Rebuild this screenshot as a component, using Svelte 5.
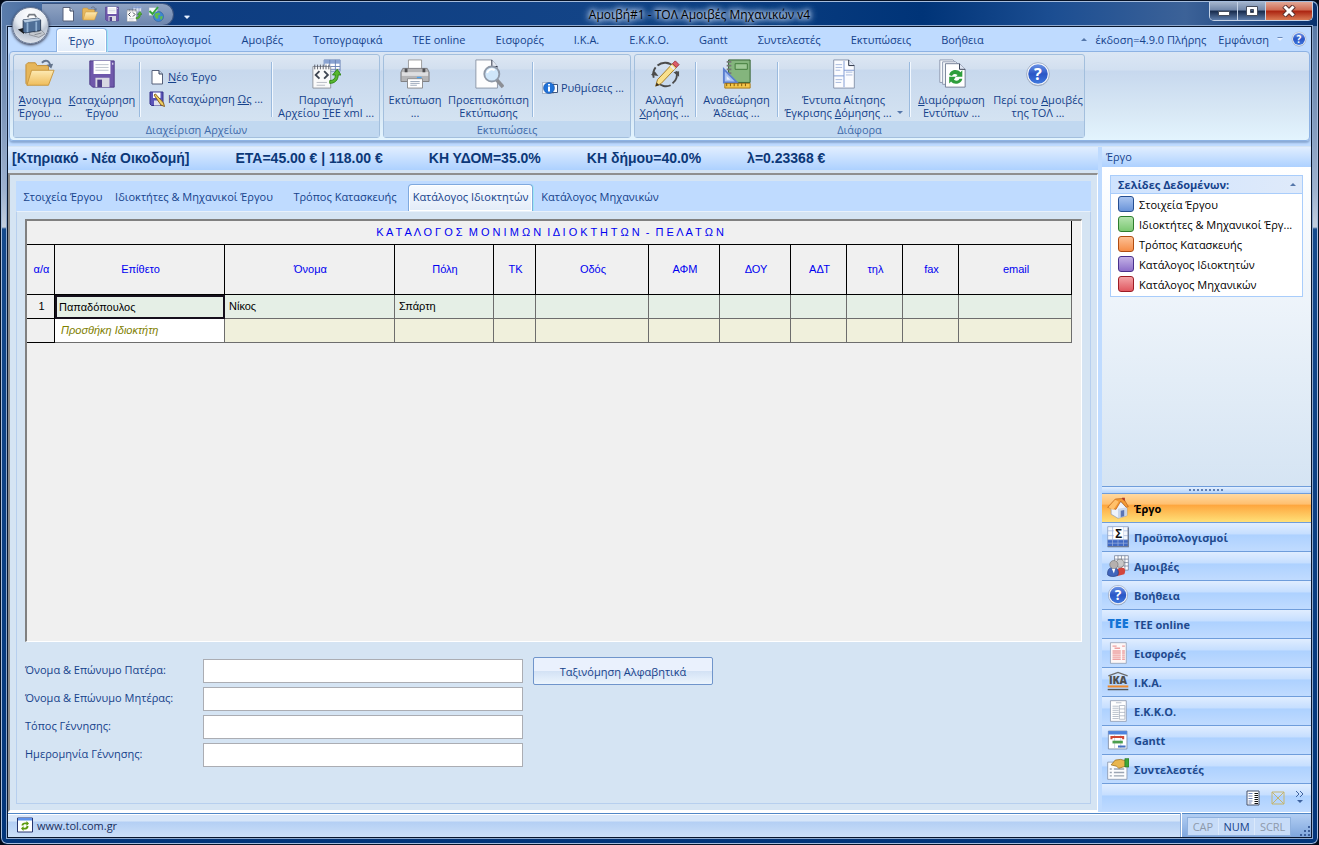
<script lang="ts">
  type Tool = { icon: string; lines: string[]; width: number; arrow?: boolean };

  const ribbonTabs = [
    'Έργο',
    'Προϋπολογισμοί',
    'Αμοιβές',
    'Τοπογραφικά',
    'ΤΕΕ online',
    'Εισφορές',
    'Ι.Κ.Α.',
    'Ε.Κ.Κ.Ο.',
    'Gantt',
    'Συντελεστές',
    'Εκτυπώσεις',
    'Βοήθεια',
  ];

  const quickTools = [
    { icon: 'new', label: 'Νέο' },
    { icon: 'folder', label: 'Άνοιγμα' },
    { icon: 'disk', label: 'Καταχώρηση' },
    { icon: 'xml', label: 'Αρχείο xml' },
    { icon: 'globe', label: 'Έλεγχος έκδοσης' },
  ];

  // _ marks the access key letter
  const fileTools: Tool[] = [
    { icon: 'folder', lines: ['_Άνοιγμα', 'Έργου ...'], width: 52 },
    { icon: 'disk', lines: ['_Καταχώρηση', 'Έργου'], width: 72 },
  ];
  const xmlTool: Tool = { icon: 'xml', lines: ['Παραγωγή', 'Αρχείου _ΤΕΕ xml ...'], width: 106 };
  const printTools: Tool[] = [
    { icon: 'printer', lines: ['Εκτύπωση', '...'], width: 62 },
    { icon: 'preview', lines: ['Προεπισκόπιση', 'Εκτύπωσης'], width: 85 },
  ];
  const miscTools: Tool[][] = [
    [{ icon: 'pencil', lines: ['Αλλαγή', '_Χρήσης ...'], width: 59 }],
    [{ icon: 'rulers', lines: ['Αναθεώρηση', 'Άδειας ...'], width: 79 }],
    [{ icon: 'forms', lines: ['Έντυπα Αίτησης', 'Έγκρισης _Δόμησης ...'], width: 129, arrow: true }],
    [
      { icon: 'recycle', lines: ['_Διαμόρφωση', 'Εντύπων ...'], width: 81 },
      { icon: 'help', lines: ['Περί του _Αμοιβές', 'της ΤΟΛ ...'], width: 92 },
    ],
  ];

  const summary = [
    '[Κτηριακό - Νέα Οικοδομή]',
    'ΕΤΑ=45.00 € | 118.00 €',
    'ΚΗ ΥΔΟΜ=35.0%',
    'ΚΗ δήμου=40.0%',
    'λ=0.23368 €',
  ];

  const pageTabs = [
    { label: 'Στοιχεία Έργου', width: 86 },
    { label: 'Ιδιοκτήτες & Μηχανικοί Έργου', width: 176 },
    { label: 'Τρόπος Κατασκευής', width: 126 },
    { label: 'Κατάλογος Ιδιοκτητών', width: 125 },
    { label: 'Κατάλογος Μηχανικών', width: 134 },
  ];

  const columns = [
    { label: 'α/α', width: 28 },
    { label: 'Επίθετο', width: 170 },
    { label: 'Όνομα', width: 170 },
    { label: 'Πόλη', width: 99 },
    { label: 'ΤΚ', width: 42 },
    { label: 'Οδός', width: 113 },
    { label: 'ΑΦΜ', width: 71 },
    { label: 'ΔΟΥ', width: 71 },
    { label: 'ΑΔΤ', width: 56 },
    { label: 'τηλ', width: 56 },
    { label: 'fax', width: 56 },
    { label: 'email', width: 113 },
  ];

  const owners = [['Παπαδόπουλος', 'Νίκος', 'Σπάρτη', '', '', '', '', '', '', '', '']];

  const fields = [
    { id: 'father', label: 'Όνομα & Επώνυμο Πατέρα:' },
    { id: 'mother', label: 'Όνομα & Επώνυμο Μητέρας:' },
    { id: 'birthplace', label: 'Τόπος Γέννησης:' },
    { id: 'birthdate', label: 'Ημερομηνία Γέννησης:' },
  ];

  const dataPages = [
    { label: 'Στοιχεία Έργου', color: 'blue' },
    { label: 'Ιδιοκτήτες & Μηχανικοί Έργ...', color: 'green' },
    { label: 'Τρόπος Κατασκευής', color: 'orange' },
    { label: 'Κατάλογος Ιδιοκτητών', color: 'purple' },
    { label: 'Κατάλογος Μηχανικών', color: 'red' },
  ];

  const modules = [
    { icon: 'home', label: 'Έργο' },
    { icon: 'sigma', label: 'Προϋπολογισμοί' },
    { icon: 'people', label: 'Αμοιβές' },
    { icon: 'help', label: 'Βοήθεια' },
    { icon: 'tee', label: 'ΤΕΕ online' },
    { icon: 'redsheet', label: 'Εισφορές' },
    { icon: 'ika', label: 'Ι.Κ.Α.' },
    { icon: 'greysheet', label: 'Ε.Κ.Κ.Ο.' },
    { icon: 'gantt', label: 'Gantt' },
    { icon: 'factors', label: 'Συντελεστές' },
  ];

  let ribbonTab = $state('Έργο');
  let pageTab = $state('Κατάλογος Ιδιοκτητών');
  let module = $state('Έργο');
</script>

{#snippet icon(name: string, size: number)}
  <svg class="icon" width={size} height={size} viewBox="0 0 32 32" aria-hidden="true">
    {#if name === 'new'}
      <path d="M6 3h14l7 7v20H6z" fill="#fff" stroke="#56607a" stroke-width="2" />
      <path d="M20 3v7h7" fill="#cfd9ea" stroke="#33405c" stroke-width="2" />
    {:else if name === 'folder'}
      <path d="M1 6l2-2h8l2 3h12v6H8L3 28 1 26z" fill="#e6b65a" stroke="#c08c35" />
      <path d="M7 12h24l-6 16H2z" fill="url(#folderFill)" stroke="#c9963e" />
      <path d="M18 4c4-4 8-2 9 3" fill="none" stroke="#64748c" stroke-width="2" />
      <path d="M23 6l7-1-2 5z" fill="#64748c" />
    {:else if name === 'disk'}
      <path d="M3 2h26v28H6l-3-3z" fill="#6f58ab" stroke="#4d3b86" />
      <path d="M7 2h18v14H7z" fill="#fff" />
      <path d="M9 6h14M9 9h14M9 12h14" stroke="#b9c0cc" />
      <path d="M9 20h15v10H9z" fill="#d8d8e2" />
      <path d="M11 22h5v8h-5z" fill="#51428a" />
      <path d="M27 4h1v2h-1z" fill="#fff" />
    {:else if name === 'disk-edit'}
      <path d="M2 2h26v27H5l-3-3z" fill="#5b54b8" stroke="#34308a" stroke-width="2" />
      <path d="M8 3h15v11H8z" fill="#fff" />
      <path d="M10 19h13v10H10z" fill="#dfe0ee" />
      <path d="M10 8l3-2 16 18 2 7-7-3z" fill="#f1cf62" stroke="#8a6420" stroke-width="2" />
    {:else if name === 'xml'}
      <path d="M14 1h17v12H14z" fill="#fff" stroke="#6a83b5" />
      <path d="M14 1h17v4H14z" fill="#89a3d2" />
      <path d="M14 8h17M14 11h17M20 1v12M26 1v12" stroke="#6a83b5" />
      <path d="M2 8h19v23H2z" fill="#fafafa" stroke="#8f949c" />
      <path d="M4 6v5M7 6v5M10 6v5M13 6v5M16 6v5M19 6v5" stroke="#555b66" />
      <path d="M9 13l-4 4 4 4M14 13l4 4-4 4" fill="none" stroke="#3f4652" stroke-width="2" />
      <path d="M6 25h11M6 28h9" stroke="#b5bac2" />
      <path d="M20 23c4 0 6-2 6-6h-3l5-6 4 6h-3c0 6-4 9-9 9z" fill="#57b72f" stroke="#2f8415" />
    {:else if name === 'globe'}
      <path d="M2 3h17v16H2z" fill="#f3f6fa" stroke="#96a4b8" />
      <path d="M3 10l6 6L20 2" fill="none" stroke="#35a63a" stroke-width="4" />
      <circle cx="21" cy="21" r="10" fill="#3e86d4" stroke="#225893" />
      <path d="M14 15l8-2 3 4-5 2 1 5-4 2-4-6zM25 20l5 1-3 7-3-3z" fill="#5dbd4e" />
    {:else if name === 'printer'}
      <path d="M9 1h14v13H9z" fill="#fff" stroke="#9a9a9a" />
      <path d="M3 10h26l2 4v10H1V14z" fill="#b4b4b6" stroke="#7d7d80" />
      <path d="M2 14h28v4H2z" fill="#dedee0" />
      <path d="M5 10h3v4H5zM24 10h3v4h-3z" fill="#4f4f52" />
      <path d="M18 19h5v2h-5z" fill="#4aa3f0" />
      <path d="M8 21h16v10H8z" fill="#fff" stroke="#8a8a8c" />
      <path d="M11 24h10M11 26h10M11 28h7" stroke="#9aa7ba" />
    {:else if name === 'preview'}
      <path d="M2 1h17l6 7v23H2z" fill="#fdfdfe" stroke="#8b95a6" />
      <path d="M19 1v7h6" fill="#e4e9f2" stroke="#222b3d" />
      <path d="M24 22l7 8" stroke="#8c8f96" stroke-width="4" />
      <circle cx="19" cy="16" r="8" fill="#cfe6fa" stroke="#8f99a8" stroke-width="2" />
      <path d="M14 15c1-4 5-5 8-3" fill="none" stroke="#fff" stroke-width="2" />
    {:else if name === 'info'}
      <path d="M1 5h22v22H1z" fill="#f5f7fa" stroke="#77859c" />
      <path d="M20 9h11v16H20z" fill="#fff" stroke="#3f567e" stroke-width="2" />
      <circle cx="14" cy="16" r="11" fill="#2072d8" stroke="#124a9a" />
      <path d="M12 13h4v10h-4zM12 8h4v3h-4z" fill="#fff" />
    {:else if name === 'pencil'}
      <path d="M8 7a12 12 0 0 1 17 1M28 13a12 12 0 0 1-4 13M22 28a12 12 0 0 1-14-3M4 20a12 12 0 0 1 2-11" fill="none" stroke="#4b4b4b" stroke-width="2" />
      <path d="M1 17l4-4 4 5zM31 13l-6 1 6 5z" fill="#4b4b4b" />
      <path d="M6 29l2-7L24 5l4 4-16 17z" fill="#f9e08c" stroke="#a57a1f" />
      <path d="M24 5l3-3 4 4-3 3z" fill="#de5c68" stroke="#99323d" />
      <path d="M22 7l4 4" stroke="#e8eef8" stroke-width="2" />
      <path d="M6 29l1-4 3 3z" fill="#3c3123" />
    {:else if name === 'rulers'}
      <path d="M7 1h23v24H7z" fill="#84b57d" stroke="#2f5e2c" />
      <path d="M14 5h13v6H14z" fill="#9cc894" stroke="#3f7a3a" />
      <path d="M5 3h5M5 7h5M5 11h5M5 15h5" stroke="#777" stroke-width="2" />
      <path d="M2 11v14h14z" fill="#a9c3f2" stroke="#5b7fd0" stroke-width="2" />
      <path d="M5 18v4h4z" fill="#e6eefb" />
      <path d="M3 26h27v5H3z" fill="#f3c64b" stroke="#a97816" />
      <path d="M5 26v3M9 26v3M13 26v3M17 26v3M21 26v3M25 26v3" stroke="#7c5409" />
    {:else if name === 'forms'}
      <path d="M5 1h16l6 6v24H5z" fill="#fbfcff" stroke="#8894ab" />
      <path d="M21 1v6h6" fill="#dfe6f3" stroke="#222b3d" />
      <path d="M16 2v28M5 18h11M16 12h11" stroke="#7c99d2" />
      <path d="M7 6h7M7 9h7M7 12h5M18 14h7M18 17h7M7 22h7M7 25h6" stroke="#a5b7dc" />
    {:else if name === 'recycle'}
      <path d="M3 1h14l4 4v20H3z" fill="#f8fafc" stroke="#8c98ae" />
      <path d="M6 3h14l4 4v20H6z" fill="#f8fafc" stroke="#8c98ae" />
      <path d="M9 5h15l6 6v19H9z" fill="#fff" stroke="#6f7b92" />
      <path d="M24 5v6h6" fill="#dfe6f3" stroke="#333c50" />
      <path d="M13 17c1-6 9-7 12-3l2-2v7h-7l2-2c-3-2-5-1-6 1zM27 21c-1 6-9 7-12 3l-2 2v-7h7l-2 3c3 2 5 1 6-1z" fill="#2f9e3c" />
    {:else if name === 'help'}
      <circle cx="16" cy="17" r="14" fill="#6d7a90" opacity="0.5" />
      <circle cx="16" cy="16" r="14" fill="#f4f7fc" stroke="#98a6bf" />
      <circle cx="16" cy="16" r="12" fill="url(#helpFill)" />
      <text x="16" y="23" text-anchor="middle" font-size="20" font-weight="700" fill="#fff">?</text>
    {:else if name === 'home'}
      <path d="M6 14L20 7l9 9v11l-13 4-10-6z" fill="#eef3fa" stroke="#8a9ab5" />
      <path d="M16 17v14l13-4V15z" fill="#c9d6ea" />
      <path d="M20 20l5-1v9l-5 1z" fill="#5a74b4" />
      <path d="M1 15L12 3l12-1 7 12-3 1-8-9-7 12z" fill="#f39a35" stroke="#b9601a" />
      <path d="M2 15L12 4l5 3-8 12z" fill="#ffc06a" />
      <path d="M22 1h4v5l-4-3z" fill="#b13a22" />
    {:else if name === 'sigma'}
      <path d="M1 1h30v29H1z" fill="#f4f7fc" stroke="#7f93b8" />
      <path d="M1 20h30v10H1z" fill="#3f69c4" />
      <path d="M1 7h30M1 14h30M1 20h30M1 25h30M8 1v29M16 20v10M24 1v29" stroke="#9db2dc" />
      <path d="M10 2h14v17H10z" fill="#fff" />
      <text x="17" y="18" text-anchor="middle" font-size="17" font-weight="700" fill="#111">Σ</text>
      <path d="M1 30h30V2" fill="none" stroke="#6d7b96" stroke-width="2" />
    {:else if name === 'people'}
      <path d="M11 1h20v21H11z" fill="#fff" stroke="#68738c" />
      <path d="M11 6h20M11 11h20M11 16h20M16 1v21M21 1v21M26 1v21" stroke="#68738c" />
      <path d="M14 31c-1-9 2-13 7-13s7 4 4 10z" fill="#d2453c" />
      <circle cx="19" cy="12" r="6" fill="#c7c7c7" stroke="#777" />
      <path d="M1 29c-1-8 3-11 8-11s9 4 7 11c-4 3-11 3-15 0z" fill="#4166bd" stroke="#274285" />
      <circle cx="10" cy="14" r="6" fill="#b5b0ae" stroke="#777" />
      <path d="M7 20l3 7 2-7z" fill="#fff" />
    {:else if name === 'tee'}
      <text x="16" y="22" text-anchor="middle" font-size="18" font-weight="800" fill="#1474d6">ΤΕΕ</text>
    {:else if name === 'redsheet'}
      <path d="M5 1h23v30H5z" fill="#fdf7f7" stroke="#8491a8" />
      <path d="M8 6h6M11 9h8M8 13h12M8 16h12M8 19h12M8 22h12M8 25h12M22 6h4M22 13h4M22 16h4M22 19h4M22 22h4M22 25h4" stroke="#eda1a1" stroke-width="2" />
    {:else if name === 'ika'}
      <path d="M2 7L16 2l14 5" fill="none" stroke="#6b6b6b" stroke-width="2" />
      <text x="16" y="19" text-anchor="middle" font-size="15" font-weight="800" fill="#4d4d4f">IKA</text>
      <path d="M1 21h30v3H1z" fill="#ee8a2e" />
      <path d="M1 26h30v2H1z" fill="#555" />
    {:else if name === 'greysheet'}
      <path d="M5 1h23v30H5z" fill="#fff" stroke="#7d899f" />
      <path d="M13 4h8M8 9h9M8 12h9M8 15h9M8 18h9M8 21h9M8 24h9M8 27h9" stroke="#9ba5b4" />
      <path d="M18 8h8v20h-8zM18 13h8M18 18h8M18 23h8" fill="none" stroke="#9ba5b4" />
    {:else if name === 'gantt'}
      <path d="M2 3h27v26H2z" fill="#fff" stroke="#66738c" />
      <path d="M2 3h27v5H2z" fill="#4d83dc" />
      <path d="M11 8v20M20 8v20" stroke="#bcc4d2" />
      <path d="M5 10h20v5h-3v-2H8v2H5z" fill="#cf4733" />
      <path d="M8 17h15v4H8z" fill="#4b9e4e" />
      <path d="M16 24h11v3H16z" fill="#446fc2" />
    {:else if name === 'factors'}
      <path d="M1 6h28v25H1z" fill="#fbfcfe" stroke="#77859c" />
      <path d="M4 16h3M4 21h3M4 26h3M10 16h15M10 21h15M10 26h15" stroke="#9ba5b4" stroke-width="2" />
      <path d="M6 10L12 3l8-1 7 2v8l-10 3-3-3z" fill="#e9b64e" stroke="#8f6416" />
      <path d="M26 1h6v12h-6z" fill="#3ea83a" stroke="#22701f" />
    {:else if name === 'sheet'}
      <path d="M4 2h24v28H4z" fill="#fff" stroke="#45506a" stroke-width="2" />
      <path d="M7 7h8M7 12h8M7 17h8M7 22h8M7 26h6" stroke="#6f83b5" stroke-width="2" />
      <path d="M19 7h7M19 11h7M19 15h7M19 19h7M19 23h7M19 27h7" stroke="#111" stroke-width="2" />
    {:else if name === 'cross'}
      <path d="M4 4h24v24H4zM4 4l24 24M28 4L4 28" fill="none" stroke="#c4b56e" stroke-width="2" />
    {:else if name === 'refresh'}
      <path d="M1 2h30v28H1z" fill="#fff" stroke="#26356e" stroke-width="2" />
      <path d="M2 2h28v5H2z" fill="#5f92ea" />
      <path d="M9 17c0-5 5-7 10-6V8l5 5-5 5v-3c-4-1-6 0-6 2zM23 18c0 6-5 8-10 7v3l-5-5 5-5v3c4 1 6 0 6-3z" fill="#5b9a10" />
    {:else if name === 'logo'}
      <path d="M15 22l12-2 5 5-7 4-11-3z" fill="#c3c8cf" stroke="#8a8f97" />
      <path d="M19 23l7-1M20 26l8-2" stroke="#7d838c" />
      <path d="M1 20l7-2v7z" fill="#17191c" />
      <path d="M7 9l17-2 3 2v12L9 24l-2-2z" fill="#4f6f97" stroke="#25364f" />
      <path d="M7 9l17-2 3 2-18 3z" fill="#b7cbe0" />
      <path d="M12 6l2-3h6l2 3" fill="none" stroke="#767b82" stroke-width="2" />
      <path d="M12 12v11M22 11v11" stroke="#8fb0d2" stroke-width="2" />
    {/if}
  </svg>
{/snippet}

{#snippet keyed(text: string)}
  {@const at = text.indexOf('_')}
  {#if at < 0}{text}{:else}{text.slice(0, at)}<u>{text[at + 1]}</u>{text.slice(at + 2)}{/if}
{/snippet}

{#snippet bigTool(tool: Tool)}
  <button class="big-tool" style:width="{tool.width}px">
    {@render icon(tool.icon, tool.icon === 'help' ? 26 : 30)}
    <span>{@render keyed(tool.lines[0])}</span>
    <span>{@render keyed(tool.lines[1])}{#if tool.arrow}<i class="caret"></i>{/if}</span>
  </button>
{/snippet}

<svg class="defs" width="0" height="0" aria-hidden="true">
  <defs>
    <linearGradient id="folderFill" x1="0" y1="0" x2="0" y2="1">
      <stop offset="0" stop-color="#fdeab4" />
      <stop offset="1" stop-color="#efbd5c" />
    </linearGradient>
    <linearGradient id="helpFill" x1="0" y1="0" x2="0" y2="1">
      <stop offset="0" stop-color="#6b93e6" />
      <stop offset="0.5" stop-color="#2a56c6" />
      <stop offset="1" stop-color="#3f78dd" />
    </linearGradient>
  </defs>
</svg>

<div class="window">
  <button class="orb" aria-label="Μενού εφαρμογής">{@render icon('logo', 28)}</button>

  <header class="titlebar">
    <div class="quick">
      {#each quickTools as tool}
        <button aria-label={tool.label}>{@render icon(tool.icon, 16)}</button>
      {/each}
    </div>
    <button class="quick-more" aria-label="Προσαρμογή"><i class="caret light"></i></button>
    <h1>Αμοιβή#1 - ΤΟΛ Αμοιβές Μηχανικών v4</h1>
    <div class="caption">
      <button aria-label="Ελαχιστοποίηση">
        <svg width="14" height="12"><path d="M1.500 6.500h11v4h-11z" fill="#fff" stroke="#454c5c" /></svg>
      </button>
      <button aria-label="Μεγιστοποίηση">
        <svg width="14" height="12">
          <path d="M1.500 1.500h11v9h-11zM5.500 4.500h3v3h-3z" fill="#fff" fill-rule="evenodd" stroke="#454c5c" />
        </svg>
      </button>
      <button class="close" aria-label="Κλείσιμο">
        <svg width="14" height="12">
          <path d="M2 1l10 10M12 1L2 11" stroke="#5b3230" stroke-width="5" />
          <path d="M2.500 1.500l9 9M11.500 1.500l-9 9" stroke="#fff" stroke-width="3" />
        </svg>
      </button>
    </div>
  </header>

  <div class="client">
    <nav class="ribbon-tabs">
      {#each ribbonTabs as tab}
        <button class:active={tab === ribbonTab} onclick={() => (ribbonTab = tab)}>{tab}</button>
      {/each}
      <div class="ribbon-right">
        <i class="caret up"></i>
        <span>έκδοση=4.9.0 Πλήρης</span>
        <button>Εμφάνιση</button>
        <i class="caret light"></i>
        <button aria-label="Βοήθεια">{@render icon('help', 16)}</button>
      </div>
    </nav>

    <div class="ribbon">
      <section class="group">
        <div class="tools">
          {#each fileTools as tool}{@render bigTool(tool)}{/each}
          <div class="sep"></div>
          <div class="small-tools file">
            <button>{@render icon('new', 16)}<span><u>Ν</u>έο Έργο</span></button>
            <button>{@render icon('disk-edit', 16)}<span>Καταχώρηση <u>Ως</u> ...</span></button>
          </div>
          <div class="sep"></div>
          {@render bigTool(xmlTool)}
        </div>
        <h2>Διαχείριση Αρχείων</h2>
      </section>
      <section class="group">
        <div class="tools">
          {#each printTools as tool}{@render bigTool(tool)}{/each}
          <div class="sep"></div>
          <div class="small-tools print">
            <button>{@render icon('info', 16)}<span>Ρυθμίσεις ...</span></button>
          </div>
        </div>
        <h2>Εκτυπώσεις</h2>
      </section>
      <section class="group">
        <div class="tools">
          {#each miscTools as part, i}
            {#if i > 0}<div class="sep"></div>{/if}
            {#each part as tool}{@render bigTool(tool)}{/each}
          {/each}
        </div>
        <h2>Διάφορα</h2>
      </section>
    </div>

    <div class="body">
      <main>
        <div class="summary">
          {#each summary as item}<span>{item}</span>{/each}
        </div>

        <div class="panel">
          <nav class="page-tabs">
            {#each pageTabs as tab}
              <button
                class:active={tab.label === pageTab}
                style:width="{tab.width}px"
                onclick={() => (pageTab = tab.label)}>{tab.label}</button
              >
            {/each}
          </nav>

          <div class="page">
            <div class="grid">
              <table>
                <colgroup>
                  {#each columns as col}<col style:width="{col.width}px" />{/each}
                </colgroup>
                <thead>
                  <tr class="title">
                    <th colspan={columns.length}>{'Κ Α Τ Α Λ Ο Γ Ο Σ  Μ Ο Ν Ι Μ Ω Ν  Ι Δ Ι Ο Κ Τ Η Τ Ω Ν  -  Π Ε Λ Α Τ Ω Ν'}</th>
                  </tr>
                  <tr class="heads">
                    {#each columns as col}<th>{col.label}</th>{/each}
                  </tr>
                </thead>
                <tbody>
                  {#each owners as owner, i}
                    <tr>
                      <th>{i + 1}</th>
                      {#each owner as value, j}<td class:current={i === 0 && j === 0}>{value}</td>{/each}
                    </tr>
                  {/each}
                  <tr class="add">
                    <th></th>
                    <td>Προσθήκη Ιδιοκτήτη</td>
                    {#each columns.slice(2) as _}<td></td>{/each}
                  </tr>
                </tbody>
              </table>
            </div>

            <div class="details">
              <div class="fields">
                {#each fields as field}
                  <label for={field.id}>{field.label}</label>
                  <input id={field.id} type="text" />
                {/each}
              </div>
              <button class="sort">Ταξινόμηση Αλφαβητικά</button>
            </div>
          </div>
        </div>
      </main>

      <aside>
        <h2>Έργο</h2>
        <div class="pages">
          <div class="page-box">
            <button class="page-head">Σελίδες Δεδομένων:<i class="caret up"></i></button>
            {#each dataPages as page}
              <a href="#top"><i class="swatch {page.color}"></i><span>{page.label}</span></a>
            {/each}
          </div>
        </div>
        <div class="grip"><i></i></div>
        <nav class="modules">
          {#each modules as item}
            <button class:active={item.label === module} onclick={() => (module = item.label)}>
              {@render icon(item.icon, 22)}<span>{item.label}</span>
            </button>
          {/each}
        </nav>
        <div class="overflow">
          <button aria-label="Κατάσταση">{@render icon('sheet', 16)}</button>
          <button aria-label="Κενό">{@render icon('cross', 16)}</button>
          <button aria-label="Περισσότερα">
            <svg width="10" height="14">
              <path d="M1 1l3 3-3 3M5 1l3 3-3 3" fill="none" stroke="#3f639f" />
              <path d="M2 10h6l-3 3z" fill="#3f639f" />
            </svg>
          </button>
        </div>
      </aside>
    </div>

    <footer>
      <div class="site">{@render icon('refresh', 16)}<a href="#top">www.tol.com.gr</a></div>
      <div class="keys">
        <div class="key-box"><span>CAP</span><span class="on">NUM</span><span>SCRL</span></div>
        <svg class="resize" width="11" height="11">
          <path d="M8 0h2v2H8zM4 4h2v2H4zM8 4h2v2H8zM0 8h2v2H0zM4 8h2v2H4zM8 8h2v2H8z" fill="#3d609b" />
        </svg>
      </div>
    </footer>
  </div>
</div>

<style>
  :global(body) {
    background: #020a18;
  }

  * {
    box-sizing: border-box;
  }

  button {
    padding: 0;
    border: 0;
    background: none;
    color: inherit;
    font: inherit;
    white-space: nowrap;
  }

  h1,
  h2 {
    margin: 0;
    font-weight: 400;
  }

  a {
    color: inherit;
    text-decoration: none;
  }

  .icon {
    display: block;
    flex: none;
  }

  .defs {
    position: absolute;
  }

  .window {
    position: relative;
    display: flex;
    flex-direction: column;
    min-height: 100vh;
    padding: 0 6px 6px;
    border: 1px solid #061226;
    border-radius: 7px;
    background: linear-gradient(#4f719f, #9fb2cf 190px, #c3cede 226px, #164a8c 228px, #02357a);
    box-shadow: inset 0 0 0 1px #a5bcdc;
    color: #15428b;
    font: 11px/13px "Open Sans", "Noto Sans", sans-serif;
  }

  .caret {
    display: inline-block;
    border: 3px solid transparent;
    border-top-color: #5577aa;
    border-bottom: 0;
  }

  .caret.up {
    border-top: 0;
    border-bottom: 3px solid #5577aa;
  }

  .caret.light {
    border-top-color: #e6f0ff;
    filter: drop-shadow(0 -1px #6a8abb);
  }

  .titlebar {
    display: flex;
    align-items: center;
    height: 25px;
    margin: 0 -5px;
    padding-left: 40px;
    border-top: 1px solid #a5bcdc;
    border-radius: 6px 6px 0 0;
    background: linear-gradient(90deg, #5a7cab, #0d3c80 140px, #134487 45%, #003478 70%, #1c4e92 80%, #3c6298 90%, #08306c);
  }

  .quick {
    display: flex;
    gap: 6px;
    height: 23px;
    align-items: center;
    padding: 0 9px 0 18px;
    border: 1px solid #39537f;
    border-left: 0;
    border-radius: 0 12px 12px 0;
    background: linear-gradient(#8fa3c3, #6d86ae);
  }

  .quick-more {
    margin-left: 10px;
  }

  h1 {
    flex: 1;
    color: #000;
    font-size: 12px;
    text-align: center;
    text-shadow: 0 0 4px #dbe8fa, 0 0 6px #c4d7f2, 0 0 8px #b7cdec, 0 0 9px #a0bbe2;
  }

  .caption {
    display: flex;
    align-self: flex-start;
    height: 19px;
    margin-right: 4px;
    border: 1px solid #c4d2e6;
    border-top: 0;
    border-radius: 0 0 5px 5px;
    overflow: hidden;
  }

  .caption button {
    display: grid;
    place-items: center;
    width: 28px;
    border-right: 1px solid #c4d2e6;
    background: linear-gradient(#a4b4cc, #7187a9 45%, #16294b 50%, #5e7daa);
  }

  .caption .close {
    width: 46px;
    border: 0;
    background: linear-gradient(#e2a796, #cf6a52 45%, #ab2310 50%, #d97a54);
  }

  .orb {
    position: absolute;
    top: 6px;
    left: 11px;
    z-index: 2;
    display: grid;
    place-items: center;
    width: 37px;
    height: 37px;
    border: 1px solid #6f7d96;
    border-radius: 50%;
    background: radial-gradient(circle at 50% 20%, #fff, #e6ebf2 45%, #bcc5d3 60%, #f2f5fa);
    box-shadow: 0 1px 3px #223;
  }

  .client {
    display: flex;
    flex: 1;
    flex-direction: column;
    border: 1px solid #07152d;
    background: #bfdbff;
    box-shadow: 0 0 0 1px #8fa9cd;
  }

  .ribbon-tabs {
    display: flex;
    height: 24px;
    padding-left: 48px;
  }

  .ribbon-tabs > button {
    padding: 0 14px;
    border: 1px solid transparent;
    border-bottom: 0;
  }

  .ribbon-tabs > button.active {
    z-index: 1;
    width: 51px;
    height: 24px;
    margin: 1px 2px -1px 0;
    padding: 0;
    border-color: #8db2e3;
    border-radius: 4px 4px 0 0;
    background: linear-gradient(#f4f9ff, #e3edf9);
    box-shadow: inset 0 0 0 1px #fff, 1px 0 #9be8f5;
  }

  .ribbon-right {
    display: flex;
    align-items: center;
    gap: 8px;
    margin-left: auto;
    padding-right: 4px;
  }

  .ribbon-right span {
    margin-right: 4px;
  }

  .ribbon {
    display: flex;
    gap: 3px;
    height: 90px;
    margin: 0 1px;
    padding: 2px 3px;
    border: 1px solid #8db2e3;
    border-radius: 4px;
    background: linear-gradient(#dbe6f4, #d2e0f1 18px, #c7d8ee 19px, #d8e8f5 60px, #e3f4fe);
    box-shadow: 0 2px 2px #8aa9d4;
  }

  .group {
    display: flex;
    flex-direction: column;
    border: 1px solid #a3bfdd;
    border-radius: 3px;
    background: linear-gradient(#dde7f3, #d2dfef 14px, #c7d8ed 15px, #d8e6f3);
  }

  .tools {
    display: flex;
    flex: 1;
  }

  .group h2 {
    height: 16px;
    background: #c1d8f0;
    color: #3e6aaa;
    font-size: 11px;
    line-height: 17px;
    text-align: center;
  }

  .big-tool {
    display: flex;
    flex-direction: column;
    align-items: center;
    padding-top: 3px;
  }

  .big-tool .icon {
    height: 32px;
    margin-bottom: 3px;
  }

  .big-tool .caret {
    margin: 0 0 3px 5px;
  }

  .sep {
    width: 2px;
    height: 55px;
    margin: 7px 0 0 1px;
    border-left: 1px solid #9abade;
    background: #f2f8ff;
  }

  .small-tools {
    display: flex;
    flex-direction: column;
    padding: 13px 6px 0 8px;
    gap: 5px;
  }

  .small-tools.file {
    width: 129px;
  }

  .small-tools.print {
    width: 96px;
    padding-top: 24px;
  }

  .small-tools button {
    display: flex;
    align-items: center;
    gap: 3px;
    height: 17px;
  }

  .body {
    display: flex;
    flex: 1;
    gap: 4px;
    margin-top: 5px;
    border-top: 1px solid #d5e4f3;
  }

  main {
    display: flex;
    flex: 1;
    flex-direction: column;
    min-width: 0;
    background: #d5e4f3;
  }

  .summary {
    display: flex;
    gap: 46px;
    height: 23px;
    margin-bottom: 3px;
    padding-left: 4px;
    background: linear-gradient(#e1eeff, #add1ff);
    color: #0c3878;
    font: bold 14px/23px "Liberation Sans", Arial, sans-serif;
    white-space: nowrap;
  }

  .panel {
    display: flex;
    flex: 1;
    flex-direction: column;
    padding: 6px;
    border: 2px solid;
    border-color: #8f8f8f #fff #fff #8a8a8a;
    border-right-width: 1px;
    background: #d5e4f3;
  }

  .page-tabs {
    display: flex;
    align-items: flex-end;
    height: 30px;
    padding-left: 4px;
    background: #bfdbff;
  }

  .page-tabs button {
    height: 27px;
    padding-bottom: 3px;
    border: 1px solid transparent;
    border-bottom: 0;
  }

  .page-tabs button.active {
    border-color: #7fa9de;
    border-radius: 4px 4px 0 0;
    background: linear-gradient(#f7fbff, #e3ecf8);
    box-shadow: inset 0 0 0 1px #fff, 1px 0 #9be8f5;
  }

  .page {
    display: flex;
    flex: 1;
    flex-direction: column;
    padding: 7px 8px 0;
    border: 1px solid #b7cfee;
    border-top-color: #e8f1fb;
  }

  .grid {
    flex: 1;
    border: 2px solid;
    border-color: #808080 #fff #fff #808080;
    border-right-width: 1px;
    border-bottom-width: 1px;
    background: #f0f0f0;
  }

  table {
    width: 1045px;
    border-collapse: separate;
    border-spacing: 0;
    table-layout: fixed;
    color: #000;
    font: 11px/13px "Liberation Sans", Arial, sans-serif;
  }

  th,
  td {
    height: 24px;
    padding: 0 4px;
    border-right: 1px solid #6d6d6d;
    border-bottom: 1px solid #6d6d6d;
    white-space: pre;
  }

  th {
    padding: 0 0 0 2px;
    border-color: #000;
    font-weight: 400;
  }

  thead th {
    color: #0000f0;
  }

  .heads th {
    height: 50px;
  }

  td {
    background: #e5efe6;
  }

  td.current {
    border: 0;
    background: #e5efe6;
    box-shadow: inset 0 0 0 2px #150f1c;
  }

  .add td {
    background: #f0f0dc;
  }

  .add td:nth-child(2) {
    padding-left: 6px;
    background: #fff;
    color: #808000;
    font-style: italic;
  }

  .details {
    display: flex;
    align-items: flex-start;
    gap: 10px;
    height: 161px;
    padding-top: 15px;
  }

  .fields {
    display: grid;
    grid-template-columns: 178px 320px;
    row-gap: 4px;
    padding-top: 2px;
  }

  .fields label {
    padding-top: 4px;
  }

  .fields input {
    height: 24px;
    border: 1px solid #abadb3;
    background: #fff;
  }

  .sort {
    width: 180px;
    height: 28px;
    border: 1px solid #7095cb;
    border-radius: 2px;
    background: linear-gradient(#eaf1fd 50%, #d3e2f5 51%, #ecf5fd);
  }

  aside {
    display: flex;
    flex-direction: column;
    width: 209px;
    background: #fff;
  }

  aside h2 {
    height: 20px;
    padding-left: 4px;
    background: linear-gradient(#e1eeff, #add1ff);
    font-size: 11px;
    line-height: 20px;
  }

  .pages {
    flex: 1;
    padding: 8px;
    background: linear-gradient(#fff, #d5e4f3);
  }

  .page-box {
    padding-bottom: 2px;
    border: 1px solid #a9cdfb;
    background: #fff;
    color: #000;
  }

  .page-head {
    display: flex;
    align-items: center;
    justify-content: space-between;
    width: 100%;
    height: 18px;
    padding: 0 6px 0 7px;
    border-bottom: 1px solid #a9cdfb;
    background: linear-gradient(90deg, #cfe3fe, #dfeafa);
    color: #15428b;
    font-weight: 700;
  }

  .page-box a {
    display: flex;
    align-items: center;
    gap: 5px;
    height: 20px;
    padding: 0 7px;
    white-space: nowrap;
  }

  .swatch {
    flex: none;
    width: 16px;
    height: 16px;
    border: 1px solid;
    border-radius: 3px;
  }

  .swatch.blue {
    border-color: #264f92;
    background: linear-gradient(#a9c4ef, #6a94d9);
  }

  .swatch.green {
    border-color: #2d7d2d;
    background: linear-gradient(#b4e3ae, #7cc873);
  }

  .swatch.orange {
    border-color: #b04c10;
    background: linear-gradient(#fcc095, #f58d48);
  }

  .swatch.purple {
    border-color: #48308c;
    background: linear-gradient(#c3b1e6, #8d6fc9);
  }

  .swatch.red {
    border-color: #9d1c24;
    background: linear-gradient(#f3a3a6, #e05860);
  }

  .grip {
    display: grid;
    place-items: center;
    height: 8px;
    border: 1px solid #6f9ddb;
    border-width: 1px 0;
    background: linear-gradient(#e3efff, #b6d4fb);
  }

  .grip i {
    width: 35px;
    height: 2px;
    background: repeating-linear-gradient(90deg, #5f7fb3 0 2px, transparent 2px 4px);
  }

  .modules button {
    display: flex;
    align-items: center;
    gap: 5px;
    width: 100%;
    height: 29px;
    padding: 0 5px;
    border-bottom: 1px solid #6f9ddb;
    background: linear-gradient(#e0edff, #c5deff 40%, #add1ff 42%, #c0dbff);
    color: #1f4a8e;
    font-weight: 700;
  }

  .modules button.active {
    background: linear-gradient(#ffd9a0, #ffc070 36%, #fea63e 40%, #ffe078);
    color: #000;
  }

  .overflow {
    display: flex;
    align-items: center;
    justify-content: flex-end;
    gap: 9px;
    height: 28px;
    padding-right: 6px;
    background: linear-gradient(#e0edff, #c5deff 40%, #add1ff 42%, #c0dbff);
  }

  footer {
    display: flex;
    height: 25px;
    border-top: 1px solid #fff;
    box-shadow: inset 0 1px #4f86c6, inset 0 2px #fff;
    background: linear-gradient(#d7e6f9 8px, #b4cff4 9px, #cbdff8);
  }

  .site {
    display: flex;
    flex: 1;
    align-items: center;
    gap: 4px;
    padding-left: 9px;
    color: #1a2f5e;
  }

  .keys {
    position: relative;
    width: 130px;
    padding: 4px 5px 0;
    border-left: 1px solid #fff;
    box-shadow: inset 0 1px #4f86c6, -1px 0 #86a9d8;
    background: linear-gradient(#b5d0f4, #7ea6dd);
  }

  .key-box {
    display: flex;
    width: 104px;
    height: 19px;
    border: 1px solid #8fb1de;
    background: #c7dcf8;
    color: #8d99ab;
    line-height: 17px;
  }

  .key-box span {
    flex: auto;
    text-align: center;
  }

  .key-box .on {
    border: 1px solid #dbe9fb;
    border-width: 0 1px;
    color: #15428b;
  }

  .resize {
    position: absolute;
    right: 0;
    bottom: 0;
  }
</style>
